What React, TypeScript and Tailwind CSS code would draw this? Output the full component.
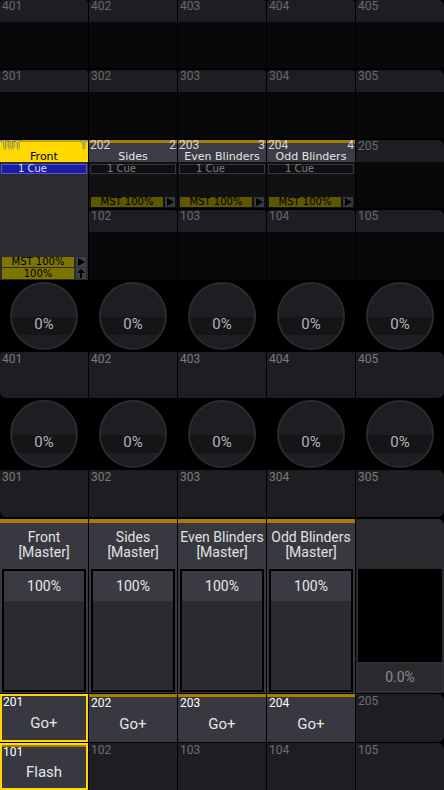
import React from "react"

const sheetRows = [
  ["401", "402", "403", "404", "405"],
  ["301", "302", "303", "304", "305"],
]

const execs = [
  { num: "202", idx: "2", name: "Sides" },
  { num: "203", idx: "3", name: "Even Blinders" },
  { num: "204", idx: "4", name: "Odd Blinders" },
]

const faders = ["Front", "Sides", "Even Blinders", "Odd Blinders"]

function Play() {
  return (
    <svg width="8" height="8" viewBox="0 0 8 8">
      <polygon points="1,0 8,4 1,8" fill="#000" />
    </svg>
  )
}

function Up() {
  return (
    <svg width="8" height="9" viewBox="0 0 8 9">
      <polygon points="4,0 8,4 5,4 5,9 3,9 3,4 0,4" fill="#000" />
    </svg>
  )
}

function SheetCell({ label, last }: { label: string; last?: boolean }) {
  return (
    <div className="flex flex-col">
      <div
        className={`h-[22px] bg-[#1e1e22] px-[2px] text-[12px] leading-[13px] text-[#68686c] ${
          last ? "rounded-tl-[3px] rounded-tr-[6px]" : "rounded-t-[3px]"
        }`}
      >
        {label}
      </div>
      <div className="flex-1 bg-[#08080a]" />
    </div>
  )
}

function ExecSheet({ num, idx, name }: { num: string; idx: string; name: string }) {
  return (
    <div className="flex flex-col bg-[#111113] font-['DejaVu_Sans',sans-serif]">
      <div className="flex h-[22px] flex-col border-t-[3px] border-[#a87d00] bg-[#3c3c46] text-[#e4e4e4]">
        <div className="-mt-[2px] flex h-[9px] justify-between px-[1px] font-['Roboto',sans-serif] text-[12px] leading-[9px] text-[#d8d8d8]">
          <span>{num}</span>
          <span>{idx}</span>
        </div>
        <div className="mt-[1px] text-center text-[11px] leading-[11px]">{name}</div>
      </div>
      <div className="mx-[1px] mt-[2px] h-[10px] border border-[#38383c] bg-[#0f0f11] pl-[16px] text-[10px] leading-[8px] text-[#808080]">
        1 Cue
      </div>
      <div className="flex-1" />
      <div className="mx-[2px] mb-[1px] flex h-[10px] gap-[2px]">
        <div className="flex-1 bg-[#5c5700] text-center text-[10px] leading-[10px] text-black">MST 100%</div>
        <div className="flex w-[10px] items-center justify-center bg-[#3a3a3e]">
          <Play />
        </div>
      </div>
    </div>
  )
}

function Knob() {
  return (
    <div className="flex justify-center pt-[2px]">
      <div className="flex h-[68px] w-[68px] items-center justify-center rounded-full border-2 border-[#2a2a2f] bg-[linear-gradient(to_bottom,#1e1e22_52%,#151518_52%,#151518_79%,#1e1e22_79%)] pt-[17px] font-['Roboto',sans-serif] text-[15px] text-[#b4b4b8]">
        0%
      </div>
    </div>
  )
}

function ButtonRow({ labels, h }: { labels: string[]; h: string }) {
  return (
    <div className={`grid grid-cols-[repeat(5,88px)] gap-x-px ${h}`}>
      {labels.map((l, i) => (
        <div
          key={l}
          className={`bg-[#1e1e22] px-[2px] text-[12px] leading-[15px] text-[#7a7a7e] ${
            i === 0 ? "rounded-tl-[2px] rounded-bl-[6px]" : ""
          } ${i === 4 ? "rounded-r-[6px]" : ""}`}
        >
          {l}
        </div>
      ))}
    </div>
  )
}

export default function App() {
  return (
    <div className="flex h-[790px] w-[444px] flex-col overflow-hidden bg-black font-['Roboto',sans-serif]">
      {sheetRows.map((row, r) => (
        <div key={r} className={`grid h-[68px] grid-cols-[repeat(5,88px)] gap-x-px ${r > 0 ? "mt-[2px]" : ""}`}>
          {row.map((l, i) => (
            <SheetCell key={l} label={l} last={i === 4} />
          ))}
        </div>
      ))}

      {/* executor sheets */}
      <div className="mt-[2px] grid h-[140px] grid-cols-[repeat(5,88px)] grid-rows-[68px_70px] gap-x-px gap-y-[2px]">
        <div className="row-span-2 flex flex-col bg-[#2b2b30] font-['DejaVu_Sans',sans-serif]">
          <div className="flex h-[22px] flex-col border-t-2 border-[#c9a400] bg-[#ffd800] text-black">
            <div className="-mt-[1px] flex h-[9px] justify-between px-[1px] font-['Roboto',sans-serif] text-[12px] leading-[9px] text-[#f4e9a0] [text-shadow:0_0_1px_#000,0_0_1px_#000]">
              <span>101</span>
              <span>1</span>
            </div>
            <div className="mt-[1px] text-center text-[11px] leading-[11px]">Front</div>
          </div>
          <div className="mx-[1px] mt-[2px] h-[10px] border border-[#5656c8] bg-[#1c1ca2] pl-[16px] text-[10px] leading-[8px] text-[#dcdcff]">
            1 Cue
          </div>
          <div className="flex-1" />
          <div className="mx-[2px] flex h-[10px] gap-[2px]">
            <div className="flex-1 bg-[#7c7600] text-center text-[10px] leading-[10px] text-black">MST 100%</div>
            <div className="flex w-[10px] items-center justify-center bg-[#3e3e44]">
              <Play />
            </div>
          </div>
          <div className="mx-[2px] mb-[1px] mt-[1px] flex h-[11px] gap-[2px]">
            <div className="flex-1 bg-[#7c7600] text-center text-[10px] leading-[11px] text-black">100%</div>
            <div className="flex w-[10px] items-center justify-center bg-[#3e3e44]">
              <Up />
            </div>
          </div>
        </div>
        {execs.map((e) => (
          <ExecSheet key={e.num} {...e} />
        ))}
        <SheetCell label="205" last />
        {["102", "103", "104", "105"].map((l, i) => (
          <SheetCell key={l} label={l} last={i === 3} />
        ))}
      </div>

      <div className="grid h-[72px] grid-cols-[repeat(5,88px)] gap-x-px">
        {[0, 1, 2, 3, 4].map((i) => (
          <Knob key={i} />
        ))}
      </div>
      <ButtonRow labels={["401", "402", "403", "404", "405"]} h="h-[46px]" />
      <div className="grid h-[72px] grid-cols-[repeat(5,88px)] gap-x-px">
        {[0, 1, 2, 3, 4].map((i) => (
          <Knob key={i} />
        ))}
      </div>
      <ButtonRow labels={["301", "302", "303", "304", "305"]} h="h-[47px]" />

      {/* faders */}
      <div className="mt-[2px] grid h-[174px] grid-cols-[repeat(5,88px)] gap-x-px">
        {faders.map((f) => (
          <div key={f} className="flex flex-col bg-[#383840]">
            <div className="flex h-[50px] flex-col items-center justify-center border-t-4 border-[#a87d00] pb-[2px] text-[14px] leading-[15px] text-[#e2e2e2]">
              <span>{f}</span>
              <span>[Master]</span>
            </div>
            <div className="mx-[2px] mb-[1px] flex flex-1 flex-col border-2 border-black bg-[#2a2a30]">
              <div className="flex h-[30px] items-center justify-center bg-[#3a3a42] text-[14px] text-[#e8e8e8]">100%</div>
            </div>
          </div>
        ))}
        <div className="flex flex-col rounded-tr-[6px] bg-[#2a2a2e]">
          <div className="h-[50px]" />
          <div className="mx-[2px] flex-1 bg-black" />
          <div className="mx-[1px] mb-[1px] flex h-[30px] items-center justify-center border border-[#333338] bg-[#2a2a2e] text-[14px] text-[#8a8a8e]">
            0.0%
          </div>
        </div>
      </div>

      {/* go buttons */}
      <div className="mt-px grid h-[48px] grid-cols-[repeat(5,88px)] gap-x-px">
        <div className="flex flex-col border-2 border-[#ffd800] bg-[#383840]">
          <div className="px-[1px] text-[12px] leading-[12px] text-white">201</div>
          <div className="flex flex-1 items-center justify-center pb-[2px] text-[15px] text-[#e6e6e6]">Go+</div>
        </div>
        {["202", "203", "204"].map((l) => (
          <div key={l} className="flex flex-col border-t-[3px] border-[#a87d00] bg-[#383840]">
            <div className="px-[2px] text-[12px] leading-[12px] text-white">{l}</div>
            <div className="flex flex-1 items-center justify-center pb-[3px] text-[15px] text-[#e6e6e6]">Go+</div>
          </div>
        ))}
        <div className="rounded-r-[6px] bg-[#1e1e22] px-[2px] text-[12px] leading-[15px] text-[#6e6e72]">205</div>
      </div>

      <div className="mt-px grid flex-1 grid-cols-[repeat(5,88px)] gap-x-px">
        <div className="flex flex-col border-2 border-[#ffd800] bg-[#383840]">
          <div className="border-t-[2px] border-[#a87d00] px-[1px] text-[12px] leading-[10px] text-white">101</div>
          <div className="flex flex-1 items-center justify-center text-[15px] text-[#e6e6e6]">Flash</div>
        </div>
        {["102", "103", "104", "105"].map((l, i) => (
          <div
            key={l}
            className={`bg-[#1e1e22] px-[2px] text-[12px] leading-[15px] text-[#6e6e72] ${i === 3 ? "rounded-tr-[6px]" : ""}`}
          >
            {l}
          </div>
        ))}
      </div>
    </div>
  )
}
